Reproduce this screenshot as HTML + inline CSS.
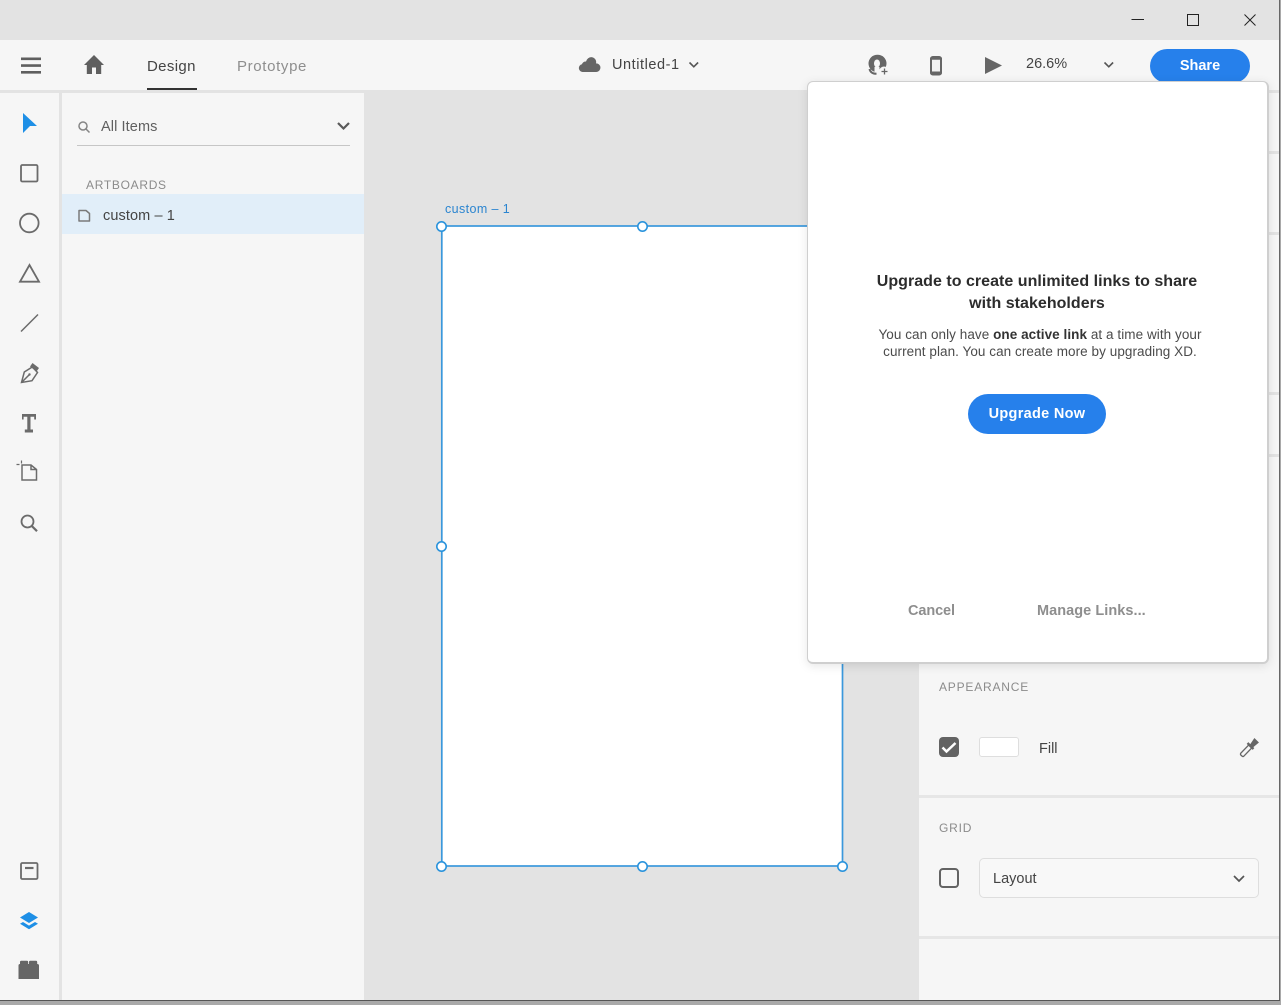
<!DOCTYPE html>
<html><head><meta charset="utf-8"><style>
html,body{margin:0;padding:0;width:1281px;height:1005px;overflow:hidden;background:#a9a9a9}
*{box-sizing:border-box}
body{font-family:"Liberation Sans",sans-serif;color:#3b3b3b;position:relative}
.a{position:absolute}
.t{position:absolute;white-space:nowrap;line-height:20px;font-size:15px}
svg{position:absolute;overflow:visible}
</style></head><body>
<div class="a" style="left:0;top:0;width:1280px;height:1000px;background:#e3e3e3"></div>
<div class="a" style="left:1279px;top:0;width:1px;height:1000px;background:#666"></div>
<div class="a" style="left:0;top:1000px;width:1280px;height:1px;background:#555"></div>
<!-- window controls -->
<svg style="left:0;top:0" width="1281" height="40" fill="none" stroke="#222" stroke-width="1"><path d="M1131.500 19.500H1144"/><rect x="1187.500" y="14.500" width="11" height="11"/><path d="M1244.500 14.500L1255.500 25.500M1255.500 14.500L1244.500 25.500"/></svg>
<!-- top bar -->
<div class="a" style="left:0;top:40px;width:1279px;height:50px;background:#f6f6f6"></div>
<svg style="left:0;top:40px" width="130" height="50"><path d="M21 17.500h20v2.600H21zM21 24.300h20v2.600H21zM21 31h20v2.600H21z" fill="#5f5f5f"/><path d="M94 15L84 25h2.800v9h5.200v-6.500h4v6.500h5.200v-9H104z" fill="#5f5f5f"/></svg>
<div class="t" style="left:147px;top:57px;color:#444;letter-spacing:.35px">Design</div>
<div class="a" style="left:147px;top:87.500px;width:50px;height:2.500px;background:#333"></div>
<div class="t" style="left:237px;top:57px;color:#8e8e8e;letter-spacing:.65px">Prototype</div>
<svg style="left:575px;top:50px" width="130" height="30"><path d="M7.500 22a3.900 3.900 0 0 1-.6-7.700a4.200 4.200 0 0 1 4.100-2.800a5.600 5.600 0 0 1 6-4.300a5 5 0 0 1 4 6.200a3.400 3.400 0 0 1 .3 8.600z" fill="#666"/><path d="M114.500 12.500l4.300 4.300 4.300-4.300" fill="none" stroke="#555" stroke-width="1.600"/></svg>
<div class="t" style="left:612px;top:55px;font-size:14.500px;color:#444;letter-spacing:.55px">Untitled-1</div>
<svg style="left:860px;top:50px" width="280" height="30"><ellipse cx="17.500" cy="13.500" rx="9" ry="8.800" fill="#666"/><ellipse cx="17" cy="13.500" rx="3" ry="4" fill="#f6f6f6"/><rect x="14.500" y="17" width="5" height="7" fill="#f6f6f6"/><path d="M9.500 19c.8 3.300 3.500 4.800 7 4.800" fill="none" stroke="#666" stroke-width="2"/><circle cx="24" cy="21.500" r="5" fill="#f6f6f6"/><path d="M24.500 18.500v6M21.500 21.500h6" stroke="#666" stroke-width="1.300"/><rect x="71" y="7" width="10" height="17.500" rx="1.800" fill="#f2f2f2" stroke="#666" stroke-width="2"/><path d="M70 8.800h12M70 22.500h12" stroke="#666" stroke-width="2"/><path d="M125 7l17 8.500-17 8.500z" fill="#666"/><path d="M244.500 12.500l4.300 4.300 4.300-4.300" fill="none" stroke="#555" stroke-width="1.600"/></svg>
<div class="t" style="left:1026px;top:54px;font-size:14.500px;color:#444">26.6%</div>
<div class="a" style="left:1150px;top:49px;width:100px;height:34px;border-radius:17px;background:#2680eb"></div>
<div class="t" style="left:1150px;top:56px;width:100px;text-align:center;color:#fff;font-weight:bold;font-size:14.500px">Share</div>
<!-- tool rail -->
<div class="a" style="left:0;top:93px;width:59px;height:907px;background:#f6f6f6"></div>
<svg style="left:0;top:93px" width="60" height="907" fill="none" stroke="#6b6b6b" stroke-width="1.800">
<path d="M23 20L37 33H30L23 40z" fill="#1e8fe6" stroke="none"/>
<rect x="21" y="72" width="16.500" height="16.500" rx="1.300"/>
<circle cx="29.300" cy="130" r="9.300"/>
<path d="M29.500 172l9.500 16.700H20z"/>
<path d="M21 238.500l17-17" stroke-width="1.500"/>
<path d="M21.500 289.500l2.800-10.500 8-5 5.200 5.500-5.500 8.200zM21.500 289.500l7.500-7.500" stroke-width="1.500"/><circle cx="29.500" cy="281.500" r="1.200" fill="#6b6b6b" stroke="none"/><path d="M32.500 270l6.500 5-2.500 3.500-6.500-5z" fill="#6b6b6b" stroke="none"/>
<path d="M22 321h14v5.500h-1.800v-2.800h-3.700v12.800h2.500v3h-8.200v-3h2.500V323.700h-3.700v2.800H22z" fill="#6b6b6b" stroke="none"/>
<path d="M22 372h9l5.500 4.500V387H22zM31 372v4.500h5.500" stroke-width="1.500"/><path d="M16.500 371.500h3M21.500 367.500v3" stroke-width="1.200"/>
<circle cx="27.500" cy="428.500" r="6"/><path d="M31.800 433l5.200 5.200" stroke-width="2.200"/>
<rect x="21" y="770" width="16.500" height="16" rx="1.300"/><path d="M25 775h8.500" stroke-width="2.200"/>
<path d="M29 819l9 5.500-9 5.500-9-5.500z" fill="#1e8fe6" stroke="none"/><path d="M23 829l6 3.600 6-3.600 3 1.700-9 5.600-9-5.600z" fill="#1e8fe6" stroke="none"/>
<path d="M18.500 872.500q0-1.500 1.500-1.500V869q0-1.200 1.200-1.200h5.800q1.200 0 1.200 1.200v2h.8v-2q0-1.200 1.200-1.200h5.800q1.200 0 1.200 1.200v2q1.800 0 1.800 1.500V886h-20.500z" fill="#666" stroke="none"/>
</svg>
<!-- layers panel -->
<div class="a" style="left:62px;top:93px;width:302px;height:907px;background:#f6f6f6"></div>
<svg style="left:77px;top:118px" width="280" height="20" fill="none" stroke="#858585" stroke-width="1.500"><circle cx="6" cy="8" r="4"/><path d="M9 11l3.500 3.500"/><path d="M261 5l5.500 5.500L272 5" stroke="#5a5a5a" stroke-width="2.200"/></svg>
<div class="t" style="left:101px;top:117px;font-size:14.500px;color:#606060;letter-spacing:.1px">All Items</div>
<div class="a" style="left:77px;top:145px;width:273px;height:1px;background:#c6c6c6"></div>
<div class="t" style="left:86px;top:175px;font-size:12px;letter-spacing:.7px;color:#8b8b8b">ARTBOARDS</div>
<div class="a" style="left:62px;top:194px;width:302px;height:40px;background:#e1eef9"></div>
<svg style="left:78px;top:209px" width="14" height="14" fill="none" stroke="#7a7a7a" stroke-width="1.500"><path d="M1 1.500h7L11.500 4.500v7.500H1z" stroke-linejoin="round"/></svg>
<div class="t" style="left:103px;top:206px;font-size:14.500px;color:#444;letter-spacing:.1px">custom – 1</div>
<!-- canvas / artboard -->
<div class="t" style="left:445px;top:199px;font-size:12.500px;color:#2b85d0;letter-spacing:.4px">custom – 1</div>
<svg style="left:0;top:0" width="1281" height="1005"><rect x="441.800" y="226" width="400.700" height="640" fill="#fff" stroke="#3a98dc" stroke-width="1.700"/><g fill="#fff" stroke="#2a93dc" stroke-width="1.600"><circle cx="441.500" cy="226.500" r="4.700"/><circle cx="642.500" cy="226.500" r="4.700"/><circle cx="441.500" cy="546.500" r="4.700"/><circle cx="441.500" cy="866.500" r="4.700"/><circle cx="642.500" cy="866.500" r="4.700"/><circle cx="842.500" cy="866.500" r="4.700"/></g></svg>
<!-- right panel -->
<div class="a" style="left:919px;top:93px;width:360px;height:907px;background:#f6f6f6"></div>
<div class="a" style="left:919px;top:795px;width:360px;height:3px;background:#e6e6e6"></div>
<div class="a" style="left:919px;top:936px;width:360px;height:3px;background:#e6e6e6"></div>
<div class="a" style="left:1268px;top:90px;width:11px;height:3px;background:#e3e3e3"></div>
<div class="a" style="left:1268px;top:151px;width:11px;height:3px;background:#e3e3e3"></div>
<div class="a" style="left:1268px;top:232px;width:11px;height:3px;background:#e3e3e3"></div>
<div class="a" style="left:1268px;top:392px;width:11px;height:3px;background:#e3e3e3"></div>
<div class="a" style="left:1268px;top:454px;width:11px;height:3px;background:#e3e3e3"></div>
<div class="t" style="left:939px;top:677px;font-size:12px;letter-spacing:.8px;color:#8b8b8b">APPEARANCE</div>
<div class="a" style="left:939px;top:737px;width:20px;height:20px;border-radius:4px;background:#636363"></div>
<svg style="left:939px;top:737px" width="20" height="20" fill="none"><path d="M3.500 10.500l4 4 9-8.500" stroke="#fff" stroke-width="2.500"/></svg>
<div class="a" style="left:979px;top:737px;width:40px;height:20px;background:#fff;border:1px solid #dedede;border-radius:3px"></div>
<div class="t" style="left:1039px;top:739px;font-size:14.500px;color:#444">Fill</div>
<svg style="left:1238px;top:737px" width="22" height="22" fill="none" stroke="#666" stroke-width="1.300"><path d="M3.500 18.500c-1 -.3-1.300-1.300-.8-2.200l8-8.300 3 3-8 8.300c-.6.400-1.400.5-2.200-.8z" fill="#f6f6f6"/><path d="M9.500 6l6 6" stroke-width="2.300"/><path d="M12.500 8l4-6 3.500 3.500-5.500 4.500z" fill="#666"/></svg>
<div class="t" style="left:939px;top:818px;font-size:12px;letter-spacing:.8px;color:#8b8b8b">GRID</div>
<div class="a" style="left:939px;top:868px;width:20px;height:20px;border-radius:4px;border:2px solid #636363"></div>
<div class="a" style="left:979px;top:858px;width:280px;height:40px;border:1px solid #dedede;border-radius:5px;background:#f8f8f8"></div>
<div class="t" style="left:993px;top:869px;font-size:14.500px;color:#444">Layout</div>
<svg style="left:1232px;top:874px" width="14" height="10" fill="none"><path d="M2 2l5 5 5-5" stroke="#555" stroke-width="1.700"/></svg>
<!-- dialog -->
<div class="a" style="left:807px;top:81px;width:462px;height:583px;background:#fff;border:1px solid #cfcfcf;border-bottom-width:2px;border-right-width:2px;border-radius:6px;box-shadow:0 2px 10px rgba(0,0,0,.1)"></div>
<div class="t" style="left:807px;top:271px;width:460px;text-align:center;font-size:16px;line-height:22px;font-weight:bold;color:#2c2c2c;white-space:normal;letter-spacing:.03px">Upgrade to create unlimited links to share<br>with stakeholders</div>
<div class="t" style="left:807px;top:326px;width:466px;text-align:center;font-size:13.500px;line-height:17px;color:#4b4b4b;white-space:normal;letter-spacing:.06px">You can only have <b style="color:#333">one active link</b> at a time with your<br>current plan. You can create more by upgrading XD.</div>
<div class="a" style="left:968px;top:394px;width:138px;height:40px;border-radius:20px;background:#2680eb"></div>
<div class="t" style="left:968px;top:404px;width:138px;text-align:center;font-size:14.500px;font-weight:bold;color:#fff;letter-spacing:.3px">Upgrade Now</div>
<div class="t" style="left:908px;top:601px;font-size:14.500px;font-weight:bold;color:#8e8e8e;letter-spacing:-.1px">Cancel</div>
<div class="t" style="left:1037px;top:601px;font-size:14.500px;font-weight:bold;color:#8e8e8e;letter-spacing:.05px">Manage Links...</div>
</body></html>
